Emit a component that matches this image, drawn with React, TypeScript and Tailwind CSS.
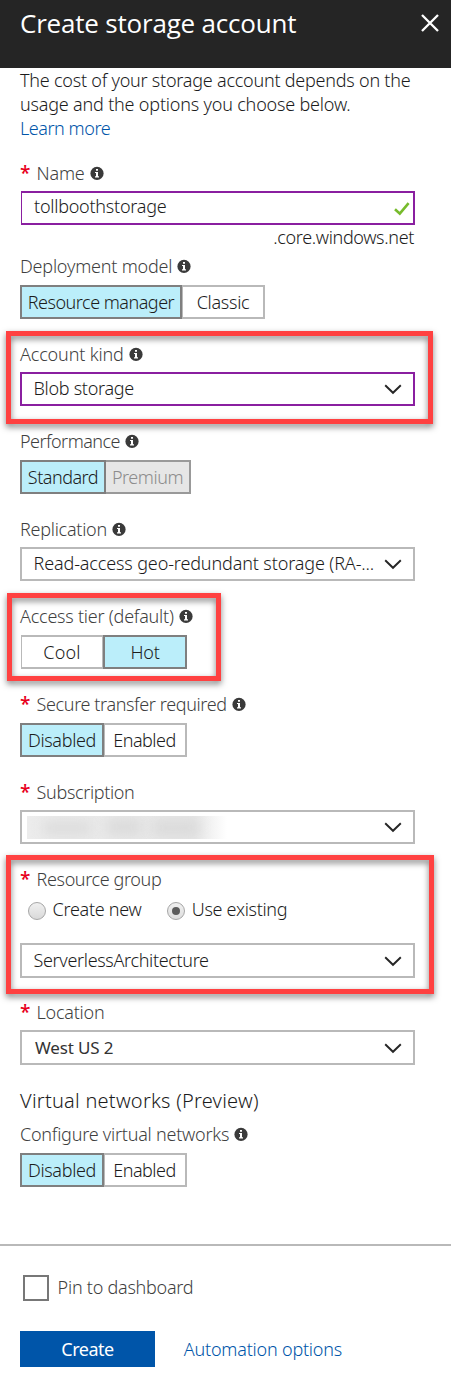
import type { ReactNode } from "react";

function InfoIcon() {
  return (
    <svg className="ml-[5px] mt-[5px] shrink-0" width="14" height="14" viewBox="0 0 14 14">
      <circle cx="7" cy="7.4" r="6.6" fill="#3a3a3a" />
      <path d="M6 3h2v1.8H6zM5 5.9h3v4.3h1v1.2H5v-1.2h1V7H5z" fill="#fff" />
    </svg>
  );
}

function Chevron() {
  return (
    <svg className="mr-[11px] shrink-0" width="18" height="12" viewBox="0 0 18 12">
      <path d="M1.2 2.2 L9 9.8 L16.8 2.2" fill="none" stroke="#262626" strokeWidth="1.9" />
    </svg>
  );
}

type LabelProps = { text: string; tracking: string; required?: boolean; info?: boolean };

function Label({ text, tracking, required, info }: LabelProps) {
  return (
    <div className="flex h-[24px] whitespace-nowrap text-[#3f3f3f]">
      {required && (
        <span className="w-[16.6px] shrink-0 font-['Open_Sans'] text-[19px] leading-[24px] font-semibold text-[#e8001c]">*</span>
      )}
      <span className={tracking}>{text}</span>
      {info && <InfoIcon />}
    </div>
  );
}

type SelectProps = { children: ReactNode; frame?: string };

function Select({ children, frame = "mt-[6px] h-[34px] border-[#b9b9b9]" }: SelectProps) {
  return (
    <div className={"flex w-[395px] items-center justify-between border-2 " + frame}>
      {children}
      <Chevron />
    </div>
  );
}

function Segment({ text, look }: { text: string; look: string }) {
  return (
    <div className={"flex h-[34px] items-center justify-center whitespace-nowrap " + look}>
      <span>{text}</span>
    </div>
  );
}

function Highlight({ place }: { place: string }) {
  return (
    <div
      className={
        "pointer-events-none absolute border-[5px] border-[#ff4141] drop-shadow-[0_3px_3px_rgba(0,0,0,0.5)] " + place
      }
    />
  );
}

function Toggle() {
  return (
    <div className="mt-[7px] flex">
      <Segment text="Disabled" look="w-[84px] border-2 border-[#7f7f7f] bg-[#bbeefa] tracking-[-0.33px]" />
      <Segment text="Enabled" look="w-[83px] border-2 border-l border-[#b9b9b9] pr-[1px] tracking-[-0.5px]" />
    </div>
  );
}

export default function App() {
  return (
    <div className="flex h-[1388px] w-[451px] flex-col overflow-hidden bg-white font-['Noto_Sans',sans-serif] text-[18px] leading-[24px] font-light text-[#1c1c1c]">
      <header className="flex h-[68px] shrink-0 justify-between bg-[#252525] pl-[20px] text-white">
        <h1 className="mt-[5px] font-['Open_Sans'] text-[26px] leading-[36px] font-normal tracking-[-0.2px]">Create storage account</h1>
        <svg className="mt-[13px] mr-[11px]" width="20" height="20" viewBox="0 0 20 20">
          <path d="M2 2 L18 18 M18 2 L2 18" stroke="#fff" strokeWidth="2.3" />
        </svg>
      </header>

      <main className="px-[20px]">
        <div className="whitespace-nowrap">
          <p className="tracking-[-0.23px]">The cost of your storage account depends on the</p>
          <p className="tracking-[-0.19px]">usage and the options you choose below.</p>
          <a className="block tracking-[-0.46px] text-[#0055a9]">Learn more</a>
        </div>

        <section className="mt-[21px]">
          <Label text="Name" tracking="tracking-[-0.2px]" required info />
          <div className="mt-[6px] ml-px flex h-[34px] w-[394px] justify-between border-2 border-l border-[#8a1fa0] pl-[12px]">
            <span className="mt-px tracking-[-0.24px]">tollboothstorage</span>
            <svg className="mt-[8px] mr-[2px]" width="18" height="16" viewBox="0 0 18 16">
              <path d="M2 8.2 L6.8 12.6 L15.6 2.2" fill="none" stroke="#77bb2c" strokeWidth="2.6" />
            </svg>
          </div>
          <div className="w-[394px] text-right tracking-[-0.35px]">.core.windows.net</div>
        </section>

        <section className="mt-[5px]">
          <Label text="Deployment model" tracking="tracking-[-0.21px]" info />
          <div className="mt-[7px] flex">
            <Segment text="Resource manager" look="w-[162px] border-2 border-[#7f7f7f] bg-[#bbeefa] tracking-[-0.5px]" />
            <Segment text="Classic" look="w-[83px] border-2 border-l border-[#b9b9b9] tracking-[-0.3px]" />
          </div>
        </section>

        <section className="relative mt-[23px]">
          <Label text="Account kind" tracking="tracking-[-0.16px]" info />
          <Select frame="mt-[6px] h-[34px] border-[#8a1fa0]">
            <span className="-mt-[2px] ml-[11.5px] tracking-[-0.29px]">Blob storage</span>
          </Select>
          <Highlight place="-top-[11px] -left-[14px] h-[93px] w-[427px]" />
        </section>

        <section className="mt-[23px]">
          <Label text="Performance" tracking="tracking-[-0.54px]" info />
          <div className="mt-[7px] flex">
            <Segment text="Standard" look="w-[86px] border-2 border-[#7f7f7f] bg-[#bbeefa] tracking-[-0.5px]" />
            <Segment text="Premium" look="w-[85px] border-2 border-l-0 border-[#999999] bg-[#e6e6e6] text-[#8c8c8c] tracking-[-0.46px]" />
          </div>
        </section>

        <section className="mt-[23px]">
          <Label text="Replication" tracking="tracking-[-0.26px]" info />
          <Select>
            <span className="-mt-[2px] ml-[11.5px] whitespace-nowrap tracking-[-0.13px]">Read-access geo-redundant storage (RA-...</span>
          </Select>
        </section>

        <section className="relative mt-[23px]">
          <Label text="Access tier (default)" tracking="tracking-[-0.23px]" info />
          <div className="mt-[7px] ml-px flex">
            <Segment text="Cool" look="w-[82px] border-y-2 border-x border-[#b9b9b9] tracking-[0.2px]" />
            <Segment text="Hot" look="w-[84px] border-2 border-[#7f7f7f] bg-[#bbeefa] tracking-[-0.18px]" />
          </div>
          <Highlight place="-top-[11px] -left-[13px] h-[88px] w-[214px]" />
        </section>

        <section className="mt-[23px]">
          <Label text="Secure transfer required" tracking="tracking-[-0.38px]" required info />
          <Toggle />
        </section>

        <section className="mt-[23px]">
          <Label text="Subscription" tracking="tracking-[-0.35px]" required />
          <Select>
            <span className="ml-[5px] flex h-[23px] w-[204px] overflow-hidden bg-linear-to-r from-[#ececec] from-0% via-[#e6e6e6] via-82% to-white to-98%">
              <span className="mt-[4px] ml-[16px] h-[16px] w-[48px] rounded bg-[#dedede] blur-[6px]" />
              <span className="mt-[3px] ml-[16px] h-[16px] w-[34px] rounded bg-[#dbdbdb] blur-[6px]" />
              <span className="mt-[4px] ml-[12px] h-[16px] w-[46px] rounded bg-[#dbdbdb] blur-[6px]" />
            </span>
          </Select>
        </section>

        <section className="relative mt-[23px]">
          <Label text="Resource group" tracking="tracking-[-0.38px]" required />
          <div className="mt-[6px] flex whitespace-nowrap">
            <span className="mt-[5px] ml-[8px] size-[18px] rounded-full border border-[#a6a6a6] bg-linear-to-b from-[#f0f0f0] to-[#d9d9d9]" />
            <span className="w-[121px] pl-[6.6px] tracking-[-0.29px]">Create new</span>
            <span className="mt-[5px] flex size-[18px] items-center justify-center rounded-full border border-[#a6a6a6] bg-linear-to-b from-[#f0f0f0] to-[#dedede]">
              <span className="size-[8px] rounded-full bg-[#5c5c5c]" />
            </span>
            <span className="ml-[6.8px] tracking-[-0.31px]">Use existing</span>
          </div>
          <Select frame="mt-[22px] h-[35px] border-[#b9b9b9]">
            <span className="-mt-px ml-[11.5px] tracking-[-0.34px]">ServerlessArchitecture</span>
          </Select>
          <Highlight place="-top-[12px] -left-[14px] h-[139px] w-[428px]" />
        </section>

        <section className="mt-[22px]">
          <Label text="Location" tracking="tracking-[-0.25px]" required />
          <Select frame="mt-[6px] h-[35px] border-[#b9b9b9]">
            <span className="ml-[13px] text-[17px] font-normal tracking-[-0.15px] text-[#333333]">West US 2</span>
          </Select>
        </section>

        <h2 className="mt-[22px] text-[20px] leading-[28px] tracking-[0.24px]">Virtual networks (Preview)</h2>
        <section className="mt-[7px]">
          <Label text="Configure virtual networks" tracking="tracking-[-0.24px]" info />
          <Toggle />
        </section>
      </main>

      <footer className="mt-[57px] border-t-2 border-[#b9b9b9] px-[20px] pt-[29px]">
        <div className="flex text-[#3f3f3f]">
          <span className="ml-[3px] size-[26px] border-2 border-[#777777]" />
          <span className="ml-[8.6px] tracking-[-0.25px]">Pin to dashboard</span>
        </div>
        <div className="mt-[30px] flex items-center">
          <button className="h-[36px] w-[135px] bg-[#0055a9] font-normal tracking-[-0.5px] text-white">Create</button>
          <a className="ml-[28.8px] tracking-[-0.21px] text-[#0055a9]">Automation options</a>
        </div>
      </footer>
    </div>
  );
}
